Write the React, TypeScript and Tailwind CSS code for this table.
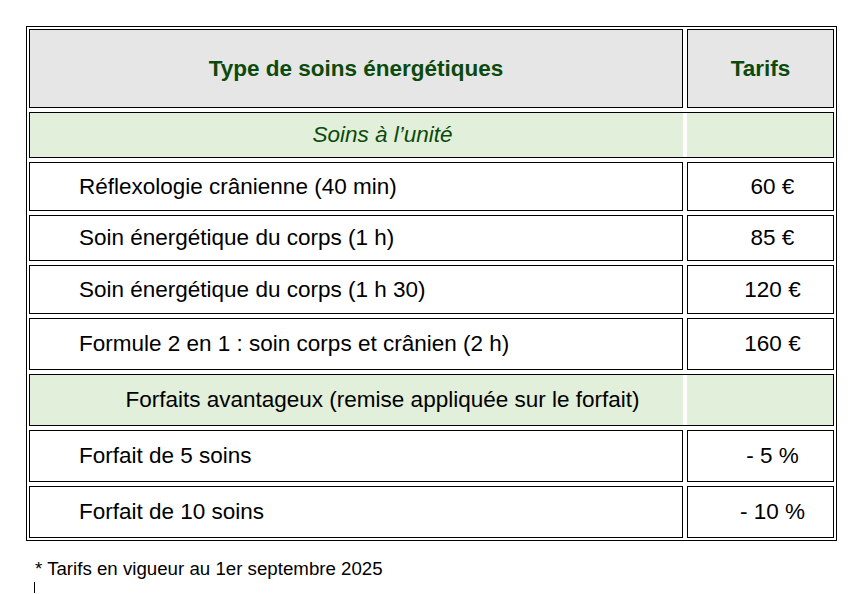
const rows: { label: string; price: string }[] = [
  { label: "Réflexologie crânienne (40 min)", price: "60 €" },
  { label: "Soin énergétique du corps (1 h)", price: "85 €" },
  { label: "Soin énergétique du corps (1 h 30)", price: "120 €" },
  { label: "Formule 2 en 1 : soin corps et crânien (2 h)", price: "160 €" },
];

const forfaits: { label: string; price: string }[] = [
  { label: "Forfait de 5 soins", price: "- 5 %" },
  { label: "Forfait de 10 soins", price: "- 10 %" },
];

const heights = ["h-[49px]", "h-[46px]", "h-[49px]", "h-[52px]"];

function PriceRow({ label, price, h }: { label: string; price: string; h: string }) {
  return (
    <div className={`flex gap-[4px] ${h}`}>
      <div className="flex w-[654px] items-center border border-black pl-[49px]">{label}</div>
      <div className="flex flex-1 items-center justify-center border border-black pl-[24px]">
        {price}
      </div>
    </div>
  );
}

function SectionRow({ children, h }: { children: React.ReactNode; h: string }) {
  return (
    <div className={`flex gap-[4px] border border-black bg-white ${h}`}>
      <div className="flex w-[653px] items-center justify-center bg-[#e2efda] pl-[52px]">
        {children}
      </div>
      <div className="flex-1 bg-[#e2efda]" />
    </div>
  );
}

export default function App() {
  return (
    <div
      className="min-h-[594px] bg-white pt-[26px] text-[22.5px] leading-[26px] text-black"
      style={{ fontFamily: '"Liberation Sans", Arial, sans-serif' }}
    >
      <div className="ml-[26px] flex w-[811px] flex-col gap-[4px] border border-black p-[2px]">
        <div className="flex h-[79px] gap-[4px] font-bold text-[#0b4a0b]">
          <div className="flex w-[654px] items-center justify-center border border-black bg-[#e6e6e6]">
            Type de soins énergétiques
          </div>
          <div className="flex flex-1 items-center justify-center border border-black bg-[#e6e6e6]">
            Tarifs
          </div>
        </div>

        <SectionRow h="h-[46px]">
          <span className="italic text-[#0b4a0b]">Soins à l’unité</span>
        </SectionRow>

        {rows.map((r, i) => (
          <PriceRow key={r.label} label={r.label} price={r.price} h={heights[i]} />
        ))}

        <SectionRow h="h-[52px]">
          <span>Forfaits avantageux (remise appliquée sur le forfait)</span>
        </SectionRow>

        {forfaits.map((r) => (
          <PriceRow key={r.label} label={r.label} price={r.price} h="h-[52px]" />
        ))}
      </div>

      <p className="ml-[35px] mt-[18px] text-[18.7px] leading-[20px]">
        * Tarifs en vigueur au 1er septembre 2025
      </p>
      <div className="ml-[34px] mt-[3px] h-[11px] w-px bg-black" />
    </div>
  );
}
